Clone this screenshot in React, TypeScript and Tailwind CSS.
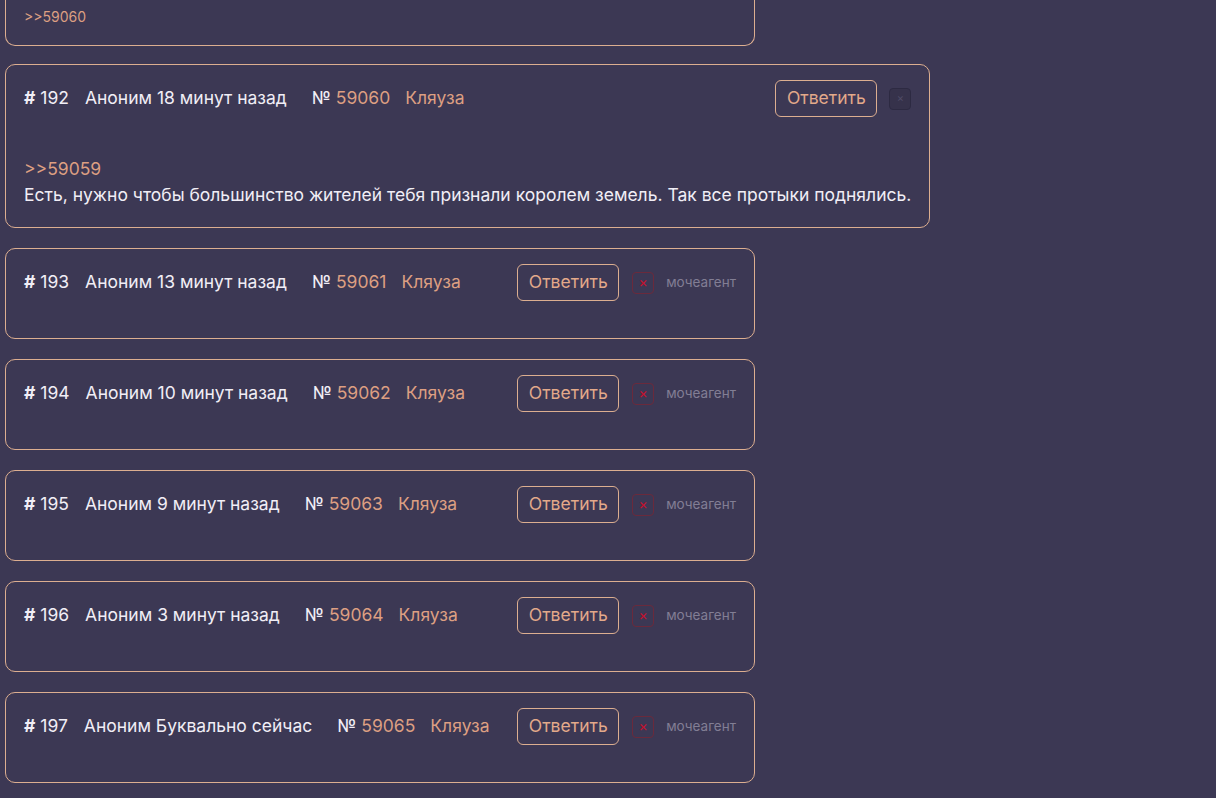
import React from "react"

interface Post {
    n: number
    author: string
    time: string
    no: number
    reply?: string
    text?: string
    tag?: string
    own?: boolean
}

const posts: Post[] = [
    { n: 192, author: "Аноним", time: "18 минут назад", no: 59060, reply: "59059", text: "Есть, нужно чтобы большинство жителей тебя признали королем земель. Так все протыки поднялись.", own: true },
    { n: 193, author: "Аноним", time: "13 минут назад", no: 59061, tag: "мочеагент" },
    { n: 194, author: "Аноним", time: "10 минут назад", no: 59062, tag: "мочеагент" },
    { n: 195, author: "Аноним", time: "9 минут назад", no: 59063, tag: "мочеагент" },
    { n: 196, author: "Аноним", time: "3 минут назад", no: 59064, tag: "мочеагент" },
    { n: 197, author: "Аноним", time: "Буквально сейчас", no: 59065, tag: "мочеагент" },
]

const DeleteButton = ({ own }: { own?: boolean }) =>
    own ? (
        <button className="flex h-[22px] w-[22px] items-center justify-center rounded-[4px] border border-[#2d2a42] bg-[#36324b] text-[11px] leading-none text-[#4f4b66]">
            ×
        </button>
    ) : (
        <button className="flex h-[22px] w-[22px] items-center justify-center rounded-[4px] border border-[#6a2a3c] pb-[1px] text-[14px] leading-none text-[#c8102e]">
            ×
        </button>
    )

const PostCard = ({ post }: { post: Post }) => (
    <div className="w-fit min-w-[750px] rounded-[10px] border border-[#dcae90] px-[18px] pt-[15px] pb-[19px]">
        <div className="flex items-center justify-between">
            <div className="flex items-center text-[17.5px] text-[#f1eef6]">
                <span><b className="font-bold">#</b> {post.n}</span>
                <span className="ml-[16px]">{post.author} {post.time}</span>
                <span className="ml-[25px]">№ <span className="text-[#dd9f82]">{post.no}</span></span>
                <span className="ml-[15px] text-[#dd9f82]">Кляуза</span>
            </div>
            <div className="ml-6 flex items-center">
                <button className="h-[37px] rounded-[6px] border border-[#dcae90] px-[10.5px] text-[17.5px] text-[#e3a98a]">
                    Ответить
                </button>
                <div className={post.own ? "ml-[12px]" : "ml-[13px]"}>
                    <DeleteButton own={post.own} />
                </div>
                {post.tag && <span className="ml-[12px] text-[13.5px] text-[#827e94]">{post.tag}</span>}
            </div>
        </div>
        {post.text ? (
            <div className="mt-[39px] text-[17.5px] leading-[26px]">
                <div className="text-[#dd9f82]">&gt;&gt;{post.reply}</div>
                <div className="text-[#f1eef6]">{post.text}</div>
            </div>
        ) : (
            <div className="h-[18px]" />
        )}
    </div>
)

export default function App() {
    return (
        <div className="min-h-[798px] bg-[#3c3854] pl-[5px]" style={{ fontFamily: "Inter, 'Noto Sans', sans-serif" }}>
            <div className="flex flex-col gap-[20px] overflow-hidden">
                {/* tail of the previous post, scrolled past its header */}
                <div className="-mb-[2px] w-[750px] rounded-b-[10px] border-x border-b border-[#dcae90] px-[18px] pt-[7px] pb-[18px]">
                    <div className="text-[14px] leading-[20px] text-[#dd9f82]">&gt;&gt;59060</div>
                </div>
                {posts.map((p) => (
                    <PostCard key={p.n} post={p} />
                ))}
            </div>
        </div>
    )
}
